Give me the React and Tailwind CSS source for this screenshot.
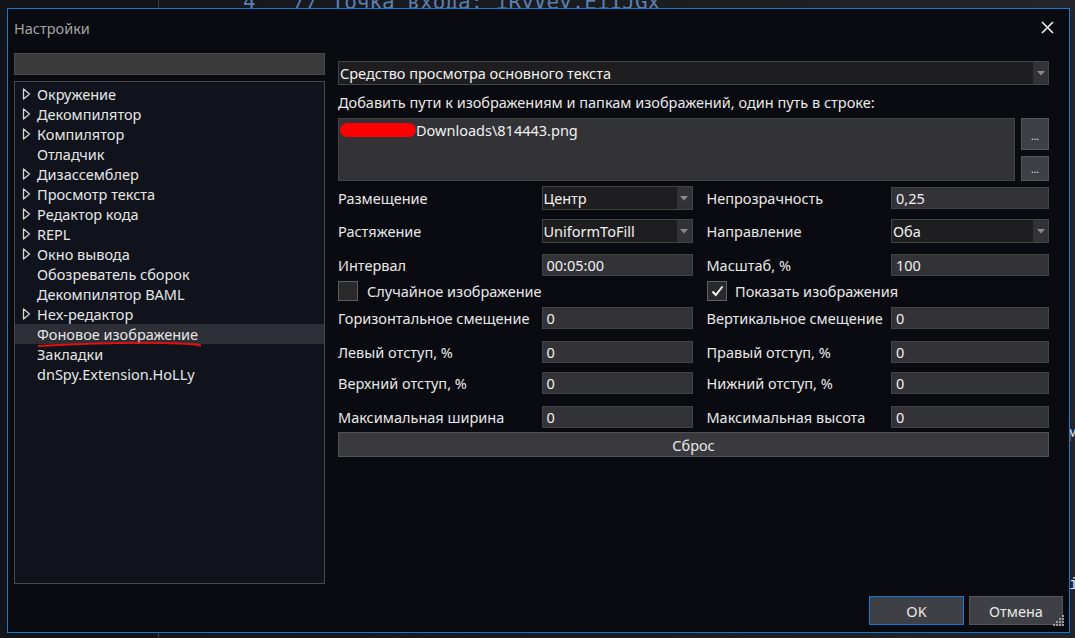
import React from "react";

const treeItems = [
  { label: "Окружение", arrow: true },
  { label: "Декомпилятор", arrow: true },
  { label: "Компилятор", arrow: true },
  { label: "Отладчик", arrow: false },
  { label: "Дизассемблер", arrow: true },
  { label: "Просмотр текста", arrow: true },
  { label: "Редактор кода", arrow: true },
  { label: "REPL", arrow: true },
  { label: "Окно вывода", arrow: true },
  { label: "Обозреватель сборок", arrow: false },
  { label: "Декомпилятор BAML", arrow: false },
  { label: "Hex-редактор", arrow: true },
  { label: "Фоновое изображение", arrow: false, selected: true },
  { label: "Закладки", arrow: false },
  { label: "dnSpy.Extension.HoLLy", arrow: false },
];

function Arrow() {
  return (
    <svg width="9" height="12" viewBox="0 0 9 12" className="shrink-0">
      <path d="M1.5 1 L7.5 6 L1.5 11 Z" fill="none" stroke="#d8d8d8" strokeWidth="1.3" strokeLinejoin="round" />
    </svg>
  );
}

function DropArrow() {
  return (
    <svg width="8" height="5" viewBox="0 0 8 5">
      <path d="M0 0 L8 0 L4 4.5 Z" fill="#8a8a8a" />
    </svg>
  );
}

function TextBox({ value, w }) {
  return (
    <div className={`${w} h-[22px] bg-[#333337] border border-[#434346] flex items-center px-[4px] text-[#f1f1f1]`}>
      {value}
    </div>
  );
}

function Combo({ value, w }) {
  return (
    <div className={`${w} h-[24px] bg-[#1e1e20] border border-[#434346] flex items-center text-[#f1f1f1]`}>
      <div className="flex-1 pl-[1px]">{value}</div>
      <div className="w-[15px] h-full bg-[#333337] flex items-center justify-center">
        <DropArrow />
      </div>
    </div>
  );
}

function CheckBox({ checked }) {
  return (
    <div className="w-[20px] h-[20px] bg-[#2a2a2d] border border-[#5f5f63] flex items-center justify-center">
      {checked && (
        <svg width="13" height="12" viewBox="0 0 13 12">
          <path d="M1.5 6.5 L4.8 10 L11.5 1.5" fill="none" stroke="#f1f1f1" strokeWidth="2" />
        </svg>
      )}
    </div>
  );
}

function Row({ left, leftInput, right, rightInput, mt, h = "h-[23px]" }) {
  return (
    <div className={`flex items-center ${h} ${mt}`}>
      <div className="w-[204px] whitespace-nowrap">{left}</div>
      <div className="w-[151px]">{leftInput}</div>
      <div className="w-[14px]" />
      <div className="w-[185px] whitespace-nowrap">{right}</div>
      <div className="w-[158px]">{rightInput}</div>
    </div>
  );
}

export default function App() {
  return (
    <div
      className="relative w-[1075px] h-[638px] overflow-hidden bg-[#12141a] text-[14.5px] leading-[20px] text-[#e8e8e8]"
      style={{ fontFamily: '"Noto Sans", "Open Sans", sans-serif' }}
    >
      {/* editor behind the dialog */}
      <div className="absolute left-[158px] top-0 w-[1px] h-full bg-[#3a3c44]" />
      <div className="absolute left-[159px] top-0 right-0 h-full bg-gradient-to-r from-[#15171d] via-[#1b1c20] to-[#24252a]" />
      <div
        className="absolute left-[243px] top-[-12px] text-[21px] leading-[28px] text-[#5b7fae] whitespace-pre"
        style={{ fontFamily: '"DejaVu Sans Mono", monospace' }}
      >
        4   // Точка входа: iRyVey.EiIJGx
      </div>
      <div
        className="absolute left-[1068px] top-[426px] text-[16px] text-[#cfe4ff]"
        style={{ fontFamily: '"DejaVu Sans Mono", monospace' }}
      >
        M
      </div>
      <div
        className="absolute left-[1069px] top-[574px] text-[16px] text-[#cfe4ff]"
        style={{ fontFamily: '"DejaVu Sans Mono", monospace' }}
      >
        i
      </div>

      {/* dialog window */}
      <div className="absolute left-[7px] top-[8px] w-[1063px] h-[625px] bg-[#0a0b10] border border-[#0e7ad4] flex flex-col">
        <div className="relative h-[37px] flex items-center pl-[6px] pt-[1px]">
          <span className="text-[#a3a3a3]">Настройки</span>
          <svg className="absolute left-[1033px] top-[12px]" width="13" height="13" viewBox="0 0 13 13">
            <path d="M1 1 L12 12 M12 1 L1 12" stroke="#f1f1f1" strokeWidth="1.6" />
          </svg>
        </div>

        <div className="flex h-[538px]">
          {/* left column */}
          <div className="w-[311px] ml-[6px] flex flex-col pt-[7px]">
            <div className="h-[22px] bg-[#3a3a3d] border border-[#4a4a4e]" />
            <div className="relative mt-[6px] h-[508px] bg-[#10131b] border border-[#48484c] pt-[2px]">
              {treeItems.map((item) => (
                <div
                  key={item.label}
                  className={`h-[20px] flex items-center ${item.selected ? "bg-[#2d2f36]" : ""}`}
                >
                  <div className="w-[22px] flex justify-start pl-[7px]">{item.arrow && <Arrow />}</div>
                  <span className="text-[#e6e6e6] whitespace-nowrap">{item.label}</span>
                </div>
              ))}
              <svg className="absolute left-[22px] top-[259px]" width="166" height="8" viewBox="0 0 166 8">
                <path d="M1 5 C 40 3, 90 1, 127 2 S 162 4, 164 5" fill="none" stroke="#e01010" strokeWidth="2" />
              </svg>
            </div>
          </div>

          {/* right column */}
          <div className="w-[711px] ml-[13px] pt-[15px] flex flex-col">
            <Combo value="Средство просмотра основного текста" w="w-[711px]" />
            <div className="mt-[5px] h-[23px] flex items-center whitespace-nowrap">
              Добавить пути к изображениям и папкам изображений, один путь в строке:
            </div>
            <div className="mt-[5px] flex">
              <div className="w-[678px] h-[63px] bg-[#333337] border border-[#434346] px-[1px] pt-[1px] flex items-start">
                <span className="mt-[3px] w-[76px] h-[14px] rounded-[7px] bg-[#ff0000] shrink-0" />
                <span className="text-[#f1f1f1]">Downloads\814443.png</span>
              </div>
              <div className="ml-[6px] flex flex-col">
                <div className="w-[28px] h-[32px] bg-[#3f3f46] border border-[#55555a] flex items-end justify-center pb-[8px] text-[10px] leading-none">
                  ...
                </div>
                <div className="mt-[6px] w-[28px] h-[25px] bg-[#3f3f46] border border-[#55555a] flex items-end justify-center pb-[6px] text-[10px] leading-none">
                  ...
                </div>
              </div>
            </div>

            <Row
              mt="mt-[5px]"
              h="h-[24px]"
              left="Размещение"
              leftInput={<Combo value="Центр" w="w-[151px]" />}
              right="Непрозрачность"
              rightInput={<TextBox value="0,25" w="w-[158px]" />}
            />
            <Row
              mt="mt-[9px]"
              h="h-[24px]"
              left="Растяжение"
              leftInput={<Combo value="UniformToFill" w="w-[151px]" />}
              right="Направление"
              rightInput={<Combo value="Оба" w="w-[158px]" />}
            />
            <Row
              mt="mt-[10px]"
              left="Интервал"
              leftInput={<TextBox value="00:05:00" w="w-[151px]" />}
              right="Масштаб, %"
              rightInput={<TextBox value="100" w="w-[158px]" />}
            />
            <div className="mt-[4px] h-[21px] flex items-center">
              <div className="w-[369px] flex items-center">
                <CheckBox />
                <span className="ml-[9px]">Случайное изображение</span>
              </div>
              <div className="flex items-center">
                <CheckBox checked />
                <span className="ml-[8px]">Показать изображения</span>
              </div>
            </div>
            <Row
              mt="mt-[5px]"
              left="Горизонтальное смещение"
              leftInput={<TextBox value="0" w="w-[151px]" />}
              right="Вертикальное смещение"
              rightInput={<TextBox value="0" w="w-[158px]" />}
            />
            <Row
              mt="mt-[11px]"
              left="Левый отступ, %"
              leftInput={<TextBox value="0" w="w-[151px]" />}
              right="Правый отступ, %"
              rightInput={<TextBox value="0" w="w-[158px]" />}
            />
            <Row
              mt="mt-[8px]"
              left="Верхний отступ, %"
              leftInput={<TextBox value="0" w="w-[151px]" />}
              right="Нижний отступ, %"
              rightInput={<TextBox value="0" w="w-[158px]" />}
            />
            <Row
              mt="mt-[11px]"
              left="Максимальная ширина"
              leftInput={<TextBox value="0" w="w-[151px]" />}
              right="Максимальная высота"
              rightInput={<TextBox value="0" w="w-[158px]" />}
            />
            <div className="mt-[4px] h-[25px] bg-[#3a3a3e] border border-[#505055] flex items-center justify-center">
              Сброс
            </div>
          </div>
        </div>

        <div className="relative flex-1 flex justify-end items-start pt-[12px] pr-[6px]">
          <div className="w-[95px] h-[29px] bg-[#3f3f46] border border-[#0e7ad4] flex items-center justify-center">
            OK
          </div>
          <div className="ml-[5px] w-[94px] h-[29px] bg-[#3f3f46] border border-[#55555a] flex items-center justify-center">
            Отмена
          </div>
          <svg className="absolute right-[5px] bottom-[5px]" width="12" height="12" viewBox="0 0 12 12">
            {[
              [10, 0], [7, 3], [10, 3], [4, 6], [7, 6], [10, 6], [1, 9], [4, 9], [7, 9], [10, 9],
            ].map(([x, y]) => (
              <rect key={`${x}-${y}`} x={x} y={y} width="2" height="2" fill="#9a9a9a" />
            ))}
          </svg>
        </div>
      </div>
    </div>
  );
}
